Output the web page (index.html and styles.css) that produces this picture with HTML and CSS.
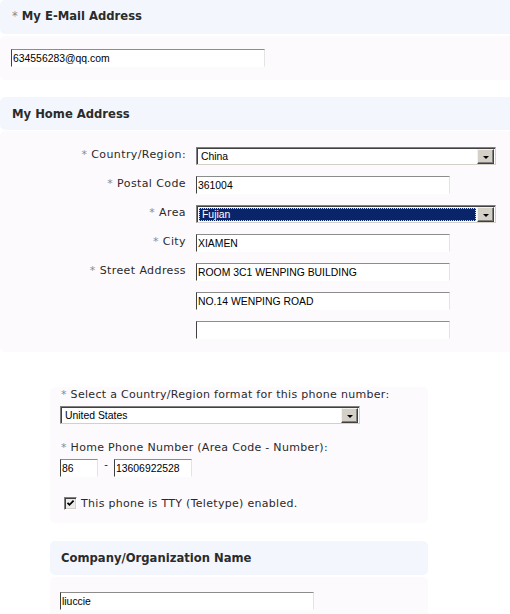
FILE: index.html
```html
<!DOCTYPE html>
<html>
<head>
<meta charset="utf-8">
<title>Profile</title>
<link rel="stylesheet" href="styles.css">
</head>
<body>
<section class="panel wide email">
  <div class="panel-head head-email"><span class="req">*</span>&nbsp;My E-Mail Address</div>
  <div class="panel-body email-body">
    <input class="field w254" type="text" value="634556283@qq.com">
  </div>
</section>

<section class="panel wide home">
  <div class="panel-head head-home">My Home Address</div>
  <div class="panel-body addr-grid">
    <div class="lbl"><span class="req">*</span>&nbsp;Country/Region:</div>
    <div class="select w300"><span class="sel-text">China</span><span class="sel-btn"><span class="tri"></span></span></div>

    <div class="lbl"><span class="req">*</span>&nbsp;Postal Code</div>
    <div class="cell"><input class="field w254" type="text" value="361004"></div>

    <div class="lbl"><span class="req">*</span>&nbsp;Area</div>
    <div class="select w300"><span class="sel-text focused">Fujian</span><span class="sel-btn"><span class="tri"></span></span></div>

    <div class="lbl"><span class="req">*</span>&nbsp;City</div>
    <div class="cell"><input class="field w254" type="text" value="XIAMEN"></div>

    <div class="lbl"><span class="req">*</span>&nbsp;Street Address</div>
    <div class="cell"><input class="field w254" type="text" value="ROOM 3C1 WENPING BUILDING"></div>

    <div class="lbl"></div>
    <div class="cell"><input class="field w254" type="text" value="NO.14 WENPING ROAD"></div>

    <div class="lbl"></div>
    <div class="cell"><input class="field w254" type="text" value=""></div>
  </div>
</section>

<section class="panel boxed phone">
  <div class="plbl"><span class="req">*</span>&nbsp;Select a Country/Region format for this phone number:</div>
  <div class="select w300 phone-sel"><span class="sel-text">United States</span><span class="sel-btn"><span class="tri"></span></span></div>
  <div class="plbl plbl2"><span class="req">*</span>&nbsp;Home Phone Number (Area Code - Number):</div>
  <div class="phone-row">
    <input class="field w38" type="text" value="86">
    <span class="dash">-</span>
    <input class="field w78" type="text" value="13606922528">
  </div>
  <div class="check-row">
    <span class="checkbox"><svg width="9" height="9" viewBox="0 0 9 9"><path d="M1.5 3.8 L3.5 5.8 L7.6 1.6" fill="none" stroke="#000" stroke-width="1.8"/></svg></span>
    <span class="check-lbl">This phone is TTY (Teletype) enabled.</span>
  </div>
</section>

<section class="panel boxed company">
  <div class="panel-head head-company">Company/Organization Name</div>
  <div class="panel-body company-body">
    <input class="field w254" type="text" value="liuccie">
  </div>
</section>
</body>
</html>
```

FILE: styles.css
```css
html, body {
  margin: 0;
  padding: 0;
  background: #ffffff;
}
body {
  width: 510px;
  height: 614px;
  overflow: hidden;
  font-family: "DejaVu Sans", Verdana, sans-serif;
  font-size: 11px;
  color: #222222;
}
.req {
  color: #8a8a8a;
  font-weight: normal;
}
.panel-head {
  background: #f3f7fd;
  display: flex;
  align-items: center;
  font-weight: bold;
  font-size: 11.6px;
  color: #2b2b2b;
  box-sizing: border-box;
}
.panel-body {
  background: #fdfafd;
  box-sizing: border-box;
}
.wide .panel-head,
.wide .panel-body {
  border-radius: 5px 0 0 5px;
}
.boxed {
  margin-left: 50px;
  width: 378px;
}
.boxed .panel-head,
.boxed .panel-body,
.phone {
  border-radius: 5px;
}

/* email */
.head-email {
  height: 34px;
  padding: 0 0 2px 12px;
}
.email-body {
  margin-top: 2px;
  height: 44px;
  padding: 13px 0 0 11px;
}

/* home */
.home {
  margin-top: 17px;
}
.head-home {
  height: 33px;
  padding-left: 12px;
}
.addr-grid {
  margin-top: 1px;
  padding: 16px 0 13px 0;
  display: grid;
  grid-template-columns: 186px 1fr;
  grid-auto-rows: 18px;
  column-gap: 10px;
  row-gap: 11px;
}
.lbl {
  text-align: right;
  line-height: 16px;
  letter-spacing: 0.4px;
  color: #2a2a2a;
  white-space: nowrap;
}
.cell {
  display: flex;
}

/* fields */
.field {
  box-sizing: border-box;
  height: 18px;
  margin: 0;
  padding: 1px 2px 0 1px;
  border-style: solid;
  border-width: 1px;
  border-color: #8c8c8c #e4e4e4 #ffffff #404040;
  background: #ffffff;
  font-family: "Liberation Sans", Tahoma, Arial, sans-serif;
  font-size: 10.4px;
  color: #000000;
  outline: none;
}
.w254 { width: 254px; }
.w38 { width: 38px; }
.w78 { width: 78px; }
.w300 { width: 300px; }

.select {
  box-sizing: border-box;
  height: 18px;
  display: flex;
  align-items: stretch;
  border-style: solid;
  border-width: 1px;
  border-color: #808080 #d4d0c8 #d4d0c8 #808080;
  box-shadow: inset 1px 1px 0 #404040;
  background: #ffffff;
  padding: 1px 1px 0 1px;
}
.sel-text {
  flex: 1;
  display: flex;
  align-items: center;
  padding-left: 3px;
  font-family: "Liberation Sans", Tahoma, Arial, sans-serif;
  font-size: 10.4px;
  color: #000000;
}
.sel-text.focused {
  background: #0a246a;
  color: #ffffff;
  outline: 1px dotted #e8d88a;
  outline-offset: -1px;
  margin: 1px;
}
.sel-btn {
  width: 17px;
  box-sizing: border-box;
  background: #d4d0c8;
  border-style: solid;
  border-width: 1px;
  border-color: #f4f2ee #404040 #404040 #f4f2ee;
  box-shadow: inset -1px -1px 0 #808080;
  display: flex;
  align-items: center;
  justify-content: center;
}
.tri {
  width: 0;
  height: 0;
  border-left: 3px solid transparent;
  border-right: 3px solid transparent;
  border-top: 3px solid #000000;
  margin-top: 1px;
}

/* phone */
.phone {
  margin-top: 35px;
  height: 136px;
  background: #fdfafd;
  box-sizing: border-box;
  padding: 0 0 0 10px;
}
.plbl {
  line-height: 16px;
  letter-spacing: 0.3px;
  color: #2a2a2a;
  padding-left: 1px;
  white-space: nowrap;
}
.phone-sel {
  margin-top: 3px;
}
.plbl2 {
  margin-top: 16px;
}
.phone-row {
  margin-top: 3px;
  display: flex;
  align-items: flex-start;
}
.dash {
  width: 16px;
  text-align: center;
  line-height: 10px;
  font-family: "Liberation Sans", Tahoma, Arial, sans-serif;
  font-size: 11px;
}
.check-row {
  margin-top: 18px;
  display: flex;
  align-items: center;
  height: 16px;
  padding-left: 4px;
}
.checkbox {
  box-sizing: border-box;
  width: 13px;
  height: 13px;
  border-style: solid;
  border-width: 1px;
  border-color: #808080 #ffffff #ffffff #808080;
  box-shadow: inset 1px 1px 0 #404040, inset -1px -1px 0 #d4d0c8;
  background: #ececec;
  display: flex;
  align-items: center;
  justify-content: center;
}
.checkbox svg {
  display: block;
}
.check-lbl {
  margin-left: 4px;
  letter-spacing: 0.3px;
  color: #2a2a2a;
}

/* company */
.company {
  margin-top: 18px;
}
.head-company {
  height: 34px;
  padding-left: 11px;
}
.company-body {
  margin-top: 2px;
  height: 60px;
  padding: 15px 0 0 10px;
}
```
